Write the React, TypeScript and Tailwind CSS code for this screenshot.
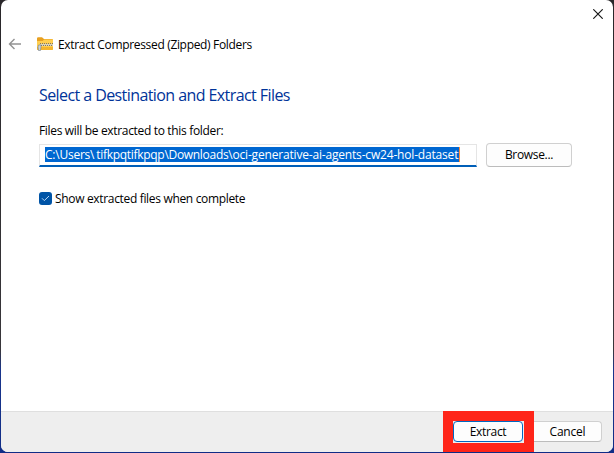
function BackArrow() {
  return (
    <svg className="block" width="14" height="14" viewBox="0 0 14 14" fill="none" stroke="#929292" strokeWidth="1.4">
      <path d="M13 7H1.5M6.5 2l-5 5 5 5" />
    </svg>
  );
}

function ZipFolder() {
  return (
    <svg className="block" width="16" height="14" viewBox="0 0 16 14">
      <path d="M0 1.5Q0 .3 1.2.3H5L7 2H15Q16 2 16 3V6H0Z" fill="#e8a020" />
      <path d="M0 4H5.5L7.3 2.6H16V12Q16 13 15 13H1Q0 13 0 12Z" fill="#ffce4f" />
      <path d="M0 10H16V12Q16 13 15 13H1Q0 13 0 12Z" fill="#f5b52e" />
      <path d="M3 7H16V9H3Z" fill="#d9d3bd" />
      <path d="M3 6.5H16M4 8.5H16" stroke="#807763" strokeWidth="1" strokeDasharray="1 1" />
      <path d="M1.5 8H4V10L3.5 13.5H1.5L1 10Z" fill="#c9d2d8" stroke="#75808a" strokeWidth=".6" />
    </svg>
  );
}

export default function App() {
  return (
    <div className="h-[453px] w-[614px] bg-[linear-gradient(to_bottom,#29272a_0px,#38363a_350px,#19358c_370px,#102c86_453px)] pl-px pr-px pb-px font-['Open_Sans','Noto_Sans',sans-serif] text-[12px] leading-4 text-black">
      <main className="flex h-[452px] flex-col overflow-hidden rounded-[7px] bg-white whitespace-nowrap">
        <header className="flex h-[58px] shrink-0 pl-[7px] pr-[10px]">
          <div className="pt-[37px]"><BackArrow /></div>
          <div className="ml-[15px] pt-[37px]"><ZipFolder /></div>
          <h1 className="ml-[5px] mt-[37px] tracking-[-0.33px]">Extract Compressed (Zipped) Folders</h1>
          <button aria-label="Close" className="ml-auto mt-[9px] h-[10px] w-[10px]">
            <svg className="block" width="10" height="10" viewBox="0 0 10 10" stroke="#171717" strokeWidth="1.15">
              <path d="M.3.3l9.4 9.4M9.7.3L.3 9.7" />
            </svg>
          </button>
        </header>
        <section className="grow pl-[38px]">
          <h2 className="mt-[26px] text-[16px] leading-[22px] tracking-[-0.58px] text-[#003399]">Select a Destination and Extract Files</h2>
          <p className="mt-[17px] tracking-[-0.33px]">Files will be extracted to this folder:</p>
          <div className="mt-1 flex h-6 items-end gap-[9px]">
            <div className="h-[23px] w-[438px] border border-b-2 border-[#e5e5e5] border-b-[#005fb8] pl-[5px] pt-[2px]">
              <div className="h-[15px] w-[415px] border-r border-[#ff8b37] bg-[#0067d1] leading-[15px] text-white"><span className="tracking-[-0.23px]">C:\Users\</span><span className="ml-[2px] tracking-[-0.3px]">tifkpqtifkpqp\Downloads\</span><span className="tracking-[-0.18px]">oci-generative-ai-agents-cw24-hol-dataset</span></div>
            </div>
            <button className="h-6 w-[86px] rounded-[4px] border border-[#d0d0d0] border-b-[#bcbcbc] bg-[#fdfdfd] tracking-[-0.33px]">Browse...</button>
          </div>
          <label className="mt-6 flex h-4 items-center">
            <span className="-mt-px flex h-[13px] w-[13px] items-center justify-center rounded-[3px] bg-[#0054a6]">
              <svg width="9" height="7" viewBox="0 0 9 7" fill="none" stroke="#b9d7f3" strokeWidth="1"><path d="M1 3.3L3.3 5.6 8 1" /></svg>
            </span>
            <span className="ml-[3px] tracking-[-0.33px]">Show extracted files when complete</span>
          </label>
        </section>
        <footer className="flex h-[41px] shrink-0 border-t border-[#dfdfdf] bg-[#eeeeee] pl-[442px]">
          <div className="-mt-px h-[42px] w-[91px] bg-[#ff2519] pl-[10px] pt-[10px]">
            <div className="h-[22px] w-[71px] bg-[#eeeeee]">
              <button className="h-[21px] w-[70px] rounded-[4px] border border-[#0067c0] bg-[#fdfdfd] tracking-[-0.33px]">Extract</button>
            </div>
          </div>
          <button className="mt-[9px] h-[21px] w-[68px] rounded-r-[4px] border border-l-0 border-[#d0d0d0] border-b-[#bcbcbc] bg-[#fdfdfd] tracking-[-0.2px]">Cancel</button>
        </footer>
      </main>
    </div>
  );
}
